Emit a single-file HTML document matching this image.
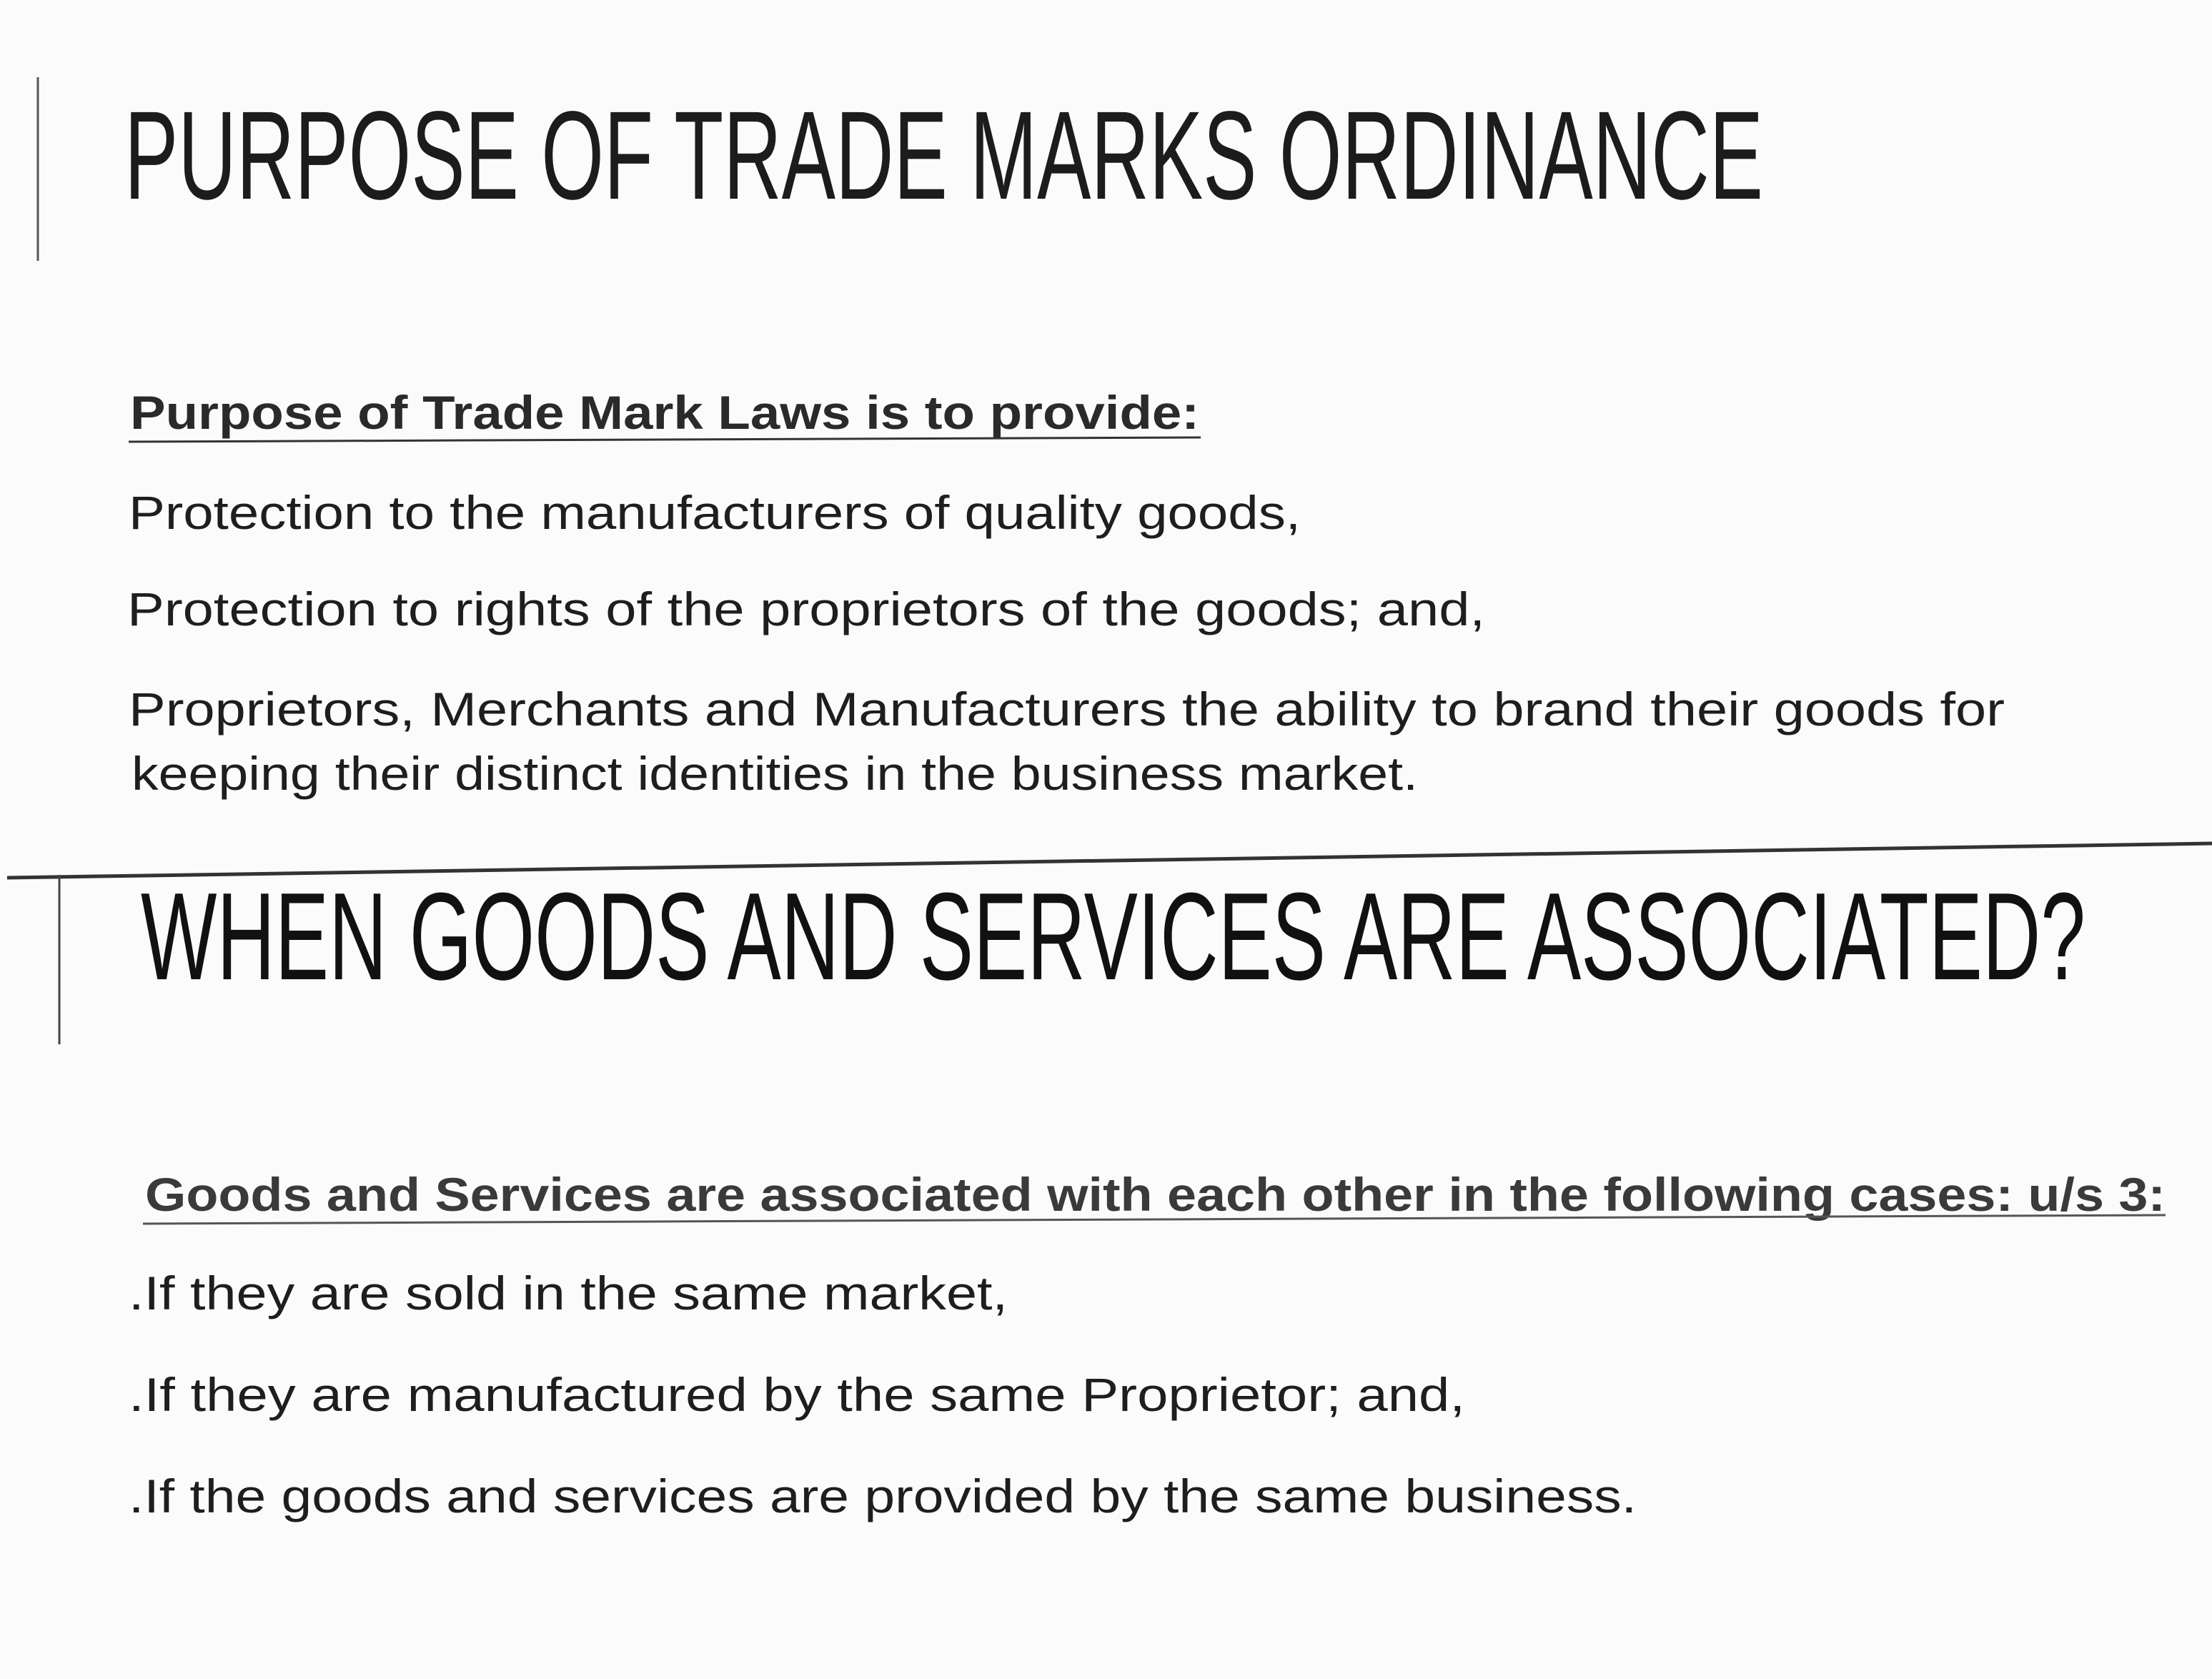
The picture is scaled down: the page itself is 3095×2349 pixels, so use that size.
<!DOCTYPE html>
<html><head><meta charset="utf-8"><style>
html,body{margin:0;padding:0;background:#fbfbfb;}
svg{display:block}
</style></head><body>
<svg width="3095" height="2349" viewBox="0 0 3095 2349" xmlns="http://www.w3.org/2000/svg">
<rect width="3095" height="2349" fill="#fbfbfb"/>
<line x1="53" y1="108" x2="53" y2="365" stroke="#555" stroke-width="3"/>
<text x="174" y="278" font-family="Liberation Sans Narrow, Liberation Sans, sans-serif" font-size="176" fill="#1c1c1c" textLength="2293" lengthAdjust="spacingAndGlyphs">PURPOSE OF TRADE MARKS ORDINANCE</text>

<g font-family="Liberation Sans, sans-serif" font-size="66" fill="#1e1e1e">
<text x="182" y="600" font-weight="bold" fill="#2a2a2a" textLength="1496" lengthAdjust="spacingAndGlyphs">Purpose of Trade Mark Laws is to provide:</text>
<line x1="180" y1="618" x2="1680" y2="612" stroke="#333" stroke-width="3"/>
<text x="180" y="740" textLength="1640" lengthAdjust="spacingAndGlyphs">Protection to the manufacturers of quality goods,</text>
<text x="178" y="875" textLength="1900" lengthAdjust="spacingAndGlyphs">Protection to rights of the proprietors of the goods; and,</text>
<text x="180" y="1015" textLength="2625" lengthAdjust="spacingAndGlyphs">Proprietors, Merchants and Manufacturers the ability to brand their goods for</text>
<text x="184" y="1105" textLength="1800" lengthAdjust="spacingAndGlyphs">keeping their distinct identities in the business market.</text>
</g>

<line x1="10" y1="1228" x2="3095" y2="1180" stroke="#333" stroke-width="5"/>
<line x1="83" y1="1224" x2="83" y2="1461" stroke="#444" stroke-width="3"/>
<text x="197" y="1370" font-family="Liberation Sans Narrow, Liberation Sans, sans-serif" font-size="174" fill="#111" textLength="2721" lengthAdjust="spacingAndGlyphs">WHEN GOODS AND SERVICES ARE ASSOCIATED?</text>

<g font-family="Liberation Sans, sans-serif" font-size="66" fill="#1e1e1e">
<text x="203" y="1694" font-weight="bold" fill="#3a3a3a" textLength="2827" lengthAdjust="spacingAndGlyphs">Goods and Services are associated with each other in the following cases: u/s 3:</text>
<line x1="200" y1="1712" x2="3030" y2="1700" stroke="#555" stroke-width="3"/>
<text x="180" y="1832" textLength="1230" lengthAdjust="spacingAndGlyphs">.If they are sold in the same market,</text>
<text x="180" y="1974" textLength="1870" lengthAdjust="spacingAndGlyphs">.If they are manufactured by the same Proprietor; and,</text>
<text x="180" y="2116" textLength="2110" lengthAdjust="spacingAndGlyphs">.If the goods and services are provided by the same business.</text>
</g>
</svg>
</body></html>
